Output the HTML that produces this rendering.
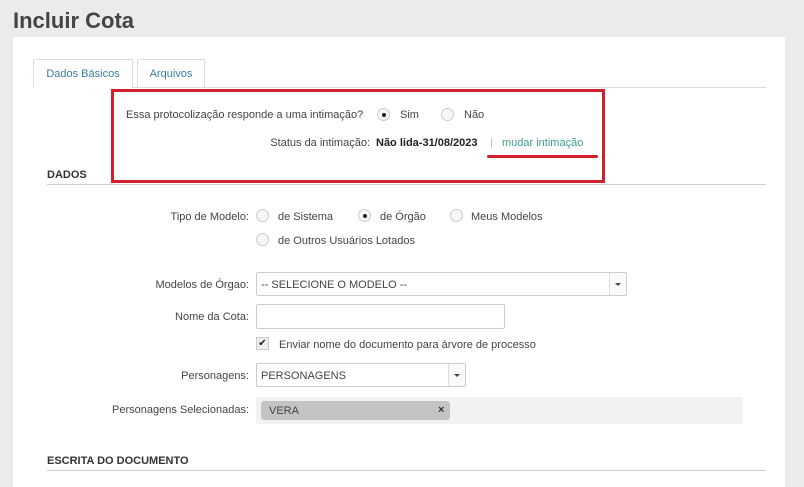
<!DOCTYPE html>
<html><head><meta charset="utf-8"><style>
*{margin:0;padding:0;box-sizing:border-box}
body{width:804px;height:487px;overflow:hidden;background:#ebebeb;font-family:"Liberation Sans",sans-serif;font-size:11px;color:#444;position:relative}
.a{position:absolute;white-space:nowrap}
.r{position:absolute;width:13px;height:13px;border-radius:50%;border:1px solid #ccc;background:#f6f6f6}
.r.on::after{content:"";position:absolute;left:3.5px;top:3.5px;width:4px;height:4px;border-radius:50%;background:#222}
.lbl{position:absolute;text-align:right;white-space:nowrap}
.box{position:absolute;border:1px solid #ccc;background:#fff;border-radius:2px}
.arr{position:absolute;top:0;right:0;bottom:0;width:17px;border-left:1px solid #ddd;background:#fafafa}
.arr::after{content:"";position:absolute;left:5px;top:10px;border:3px solid transparent;border-top:3px solid #444;border-bottom:0}
</style></head><body>
<div class="a" style="left:13px;top:8px;font-size:22px;font-weight:bold;color:#444">Incluir Cota</div>
<div class="a" style="left:13px;top:37px;width:772px;height:450px;background:#fff"></div>
<div class="a" style="left:33px;top:87px;width:733px;height:1px;background:#ddd"></div>
<div class="a" style="left:33px;top:59px;width:100px;height:29px;border:1px solid #ddd;border-bottom:none;background:#fff;color:#3b7ea1;text-align:center;line-height:29px">Dados Básicos</div>
<div class="a" style="left:137px;top:59px;width:68px;height:28px;border:1px solid #ddd;border-bottom:none;background:#fff;color:#3b7ea1;text-align:center;line-height:29px">Arquivos</div>

<div class="a" style="left:111px;top:89px;width:494px;height:94px;border:3px solid #d3202f"></div>
<div class="a" style="left:126px;top:109px">Essa protocolização responde a uma intimação?</div>
<div class="r on" style="left:377px;top:108px"></div>
<div class="a" style="left:400px;top:109px">Sim</div>
<div class="r" style="left:441px;top:108px"></div>
<div class="a" style="left:464px;top:109px">Não</div>
<div class="lbl" style="right:434px;top:137px">Status da intimação:</div>
<div class="a" style="left:376px;top:137px;font-weight:bold;color:#222">Não lida-31/08/2023</div>
<div class="a" style="left:490px;top:137px;color:#bbb">|</div>
<div class="a" style="left:502px;top:137px;color:#3a9e8f">mudar intimação</div>
<div class="a" style="left:487px;top:155px;width:111px;height:3px;background:#d3202f;border-radius:2px"></div>

<div class="a" style="left:47px;top:169px;font-weight:bold;color:#333">DADOS</div>
<div class="a" style="left:47px;top:184px;width:719px;height:1px;background:#ccc"></div>

<div class="lbl" style="right:555px;top:211px">Tipo de Modelo:</div>
<div class="r" style="left:256px;top:209px"></div><div class="a" style="left:278px;top:211px">de Sistema</div>
<div class="r on" style="left:358px;top:209px"></div><div class="a" style="left:380px;top:211px">de Órgão</div>
<div class="r" style="left:450px;top:209px"></div><div class="a" style="left:471px;top:211px">Meus Modelos</div>
<div class="r" style="left:256px;top:233px"></div><div class="a" style="left:278px;top:235px">de Outros Usuários Lotados</div>

<div class="lbl" style="right:555px;top:279px">Modelos de Órgao:</div>
<div class="box" style="left:256px;top:272px;width:371px;height:24px"><div class="a" style="left:4px;top:6px">-- SELECIONE O MODELO --</div><div class="arr"></div></div>
<div class="lbl" style="right:555px;top:311px">Nome da Cota:</div>
<div class="box" style="left:256px;top:304px;width:249px;height:25px"></div>
<div class="a" style="left:256px;top:337px;width:13px;height:13px;border:1px solid #ccc;background:#eee;font-size:10px;line-height:11px;text-align:center;color:#222">✔</div>
<div class="a" style="left:279px;top:339px">Enviar nome do documento para árvore de processo</div>
<div class="lbl" style="right:555px;top:370px">Personagens:</div>
<div class="box" style="left:256px;top:363px;width:210px;height:24px"><div class="a" style="left:4px;top:6px">PERSONAGENS</div><div class="arr"></div></div>
<div class="lbl" style="right:555px;top:404px">Personagens Selecionadas:</div>
<div class="a" style="left:256px;top:397px;width:487px;height:27px;background:#f2f2f2"></div>
<div class="a" style="left:261px;top:401px;width:189px;height:19px;background:#c4c4c4;border-radius:3px"><div class="a" style="left:8px;top:4px">VERA</div><div class="a" style="left:177px;top:3px;font-weight:bold;color:#333">×</div></div>

<div class="a" style="left:47px;top:455px;font-weight:bold;color:#333">ESCRITA DO DOCUMENTO</div>
<div class="a" style="left:47px;top:470px;width:719px;height:1px;background:#ccc"></div>
</body></html>
